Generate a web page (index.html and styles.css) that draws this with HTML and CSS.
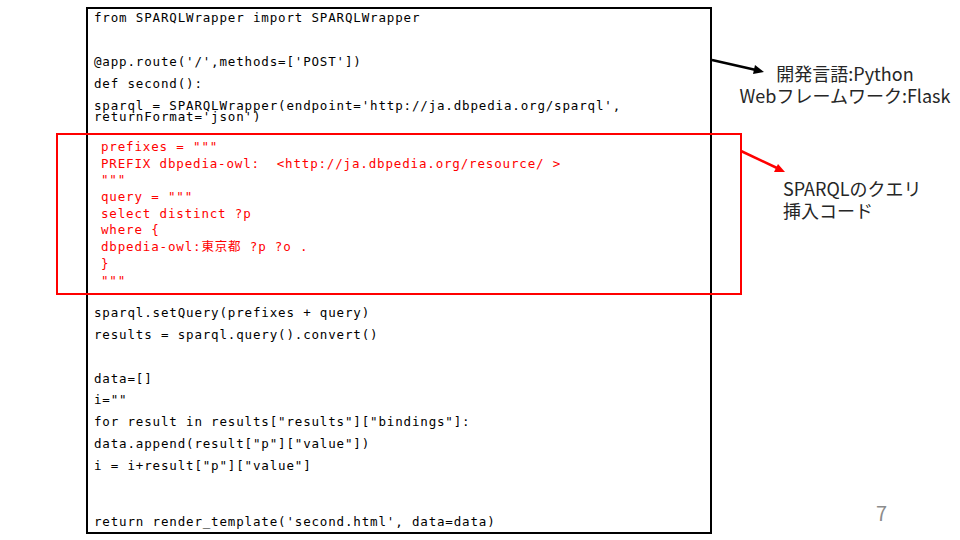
FILE: index.html
```html
<!DOCTYPE html>
<html lang="ja">
<head>
<meta charset="utf-8">
<link rel="stylesheet" href="styles.css">
</head>
<body>
<div class="slide">
  <div class="code-box">
    <div class="code">
      <div class="line">from SPARQLWrapper import SPARQLWrapper</div>
      <div class="line">&nbsp;</div>
      <div class="line">@app.route('/',methods=['POST'])</div>
      <div class="line">def second():</div>
      <div class="line">sparql = SPARQLWrapper(endpoint='http://ja.dbpedia.org/sparql',</div>
      <div class="line wrapped">returnFormat='json')</div>
      <div class="sparql">
        <div class="rline">prefixes = """</div>
        <div class="rline">PREFIX dbpedia-owl:  &lt;http://ja.dbpedia.org/resource/ &gt;</div>
        <div class="rline">"""</div>
        <div class="rline">query = """</div>
        <div class="rline">select distinct ?p</div>
        <div class="rline">where {</div>
        <div class="rline">dbpedia-owl:東京都 ?p ?o .</div>
        <div class="rline">}</div>
        <div class="rline">"""</div>
      </div>
      <div class="tail">
        <div class="line">sparql.setQuery(prefixes + query)</div>
        <div class="line">results = sparql.query().convert()</div>
        <div class="line">&nbsp;</div>
        <div class="line">data=[]</div>
        <div class="line">i=""</div>
        <div class="line">for result in results["results"]["bindings"]:</div>
        <div class="line">data.append(result["p"]["value"])</div>
        <div class="line">i = i+result["p"]["value"]</div>
        <div class="line last">return render_template('second.html', data=data)</div>
      </div>
    </div>
  </div>

  <div class="highlight"></div>

  <svg class="arrows" width="960" height="540" viewBox="0 0 960 540">
    <line x1="712" y1="60" x2="756" y2="70" stroke="#000" stroke-width="2.5"/>
    <polygon points="764,72 753,74 755,65" fill="#000"/>
    <line x1="741" y1="151" x2="777" y2="168" stroke="#f00" stroke-width="2.5"/>
    <polygon points="785,172 774,172 778,164" fill="#f00"/>
  </svg>

  <div class="note note-lang">
    <div>開発言語:Python</div>
    <div>Webフレームワーク:Flask</div>
  </div>
  <div class="note note-query">
    <div>SPARQLのクエリ</div>
    <div>挿入コード</div>
  </div>
  <div class="page-num">7</div>
</div>
</body>
</html>
```

FILE: styles.css
```css
html, body {
  margin: 0;
  padding: 0;
  background: #fff;
}

.slide {
  position: relative;
  width: 960px;
  height: 540px;
  overflow: hidden;
  background: #fff;
}

.code-box {
  box-sizing: border-box;
  margin: 7px 0 0 86px;
  width: 626px;
  height: 527px;
  border: 2px solid #000;
  padding-left: 6px;
  font-family: "DejaVu Sans Mono", "Noto Sans CJK JP", monospace;
  font-size: 12.5px;
  letter-spacing: 0.84px;
  color: #000;
}

.code {
  margin-top: -2.5px;
}

.line {
  height: 22px;
  line-height: 22px;
  white-space: pre;
}

.wrapped {
  margin-top: -10.5px;
}

.sparql {
  margin-top: 11px;
  padding-left: 7px;
  color: #f00;
}

.rline {
  height: 16.7px;
  line-height: 16.7px;
  white-space: pre;
}

.tail {
  margin-top: 13px;
}

.tail .line {
  height: 21.8px;
  line-height: 21.8px;
}

.tail .last {
  margin-top: 34.7px;
}

.highlight {
  position: absolute;
  left: 56px;
  top: 133px;
  width: 686px;
  height: 162px;
  box-sizing: border-box;
  border: 2px solid #f00;
}

.arrows {
  position: absolute;
  left: 0;
  top: 0;
}

.note {
  position: absolute;
  font-family: "Noto Sans CJK JP", sans-serif;
  font-size: 18px;
  line-height: 21.5px;
  color: #262626;
}

.note-lang {
  left: 735px;
  top: 63px;
  width: 220px;
  text-align: center;
}

.note-query {
  left: 783px;
  top: 178px;
}

.page-num {
  position: absolute;
  left: 876px;
  top: 500px;
  font-family: "Noto Sans CJK JP", sans-serif;
  font-size: 20px;
  line-height: 26px;
  color: #8c8c8c;
}
```
